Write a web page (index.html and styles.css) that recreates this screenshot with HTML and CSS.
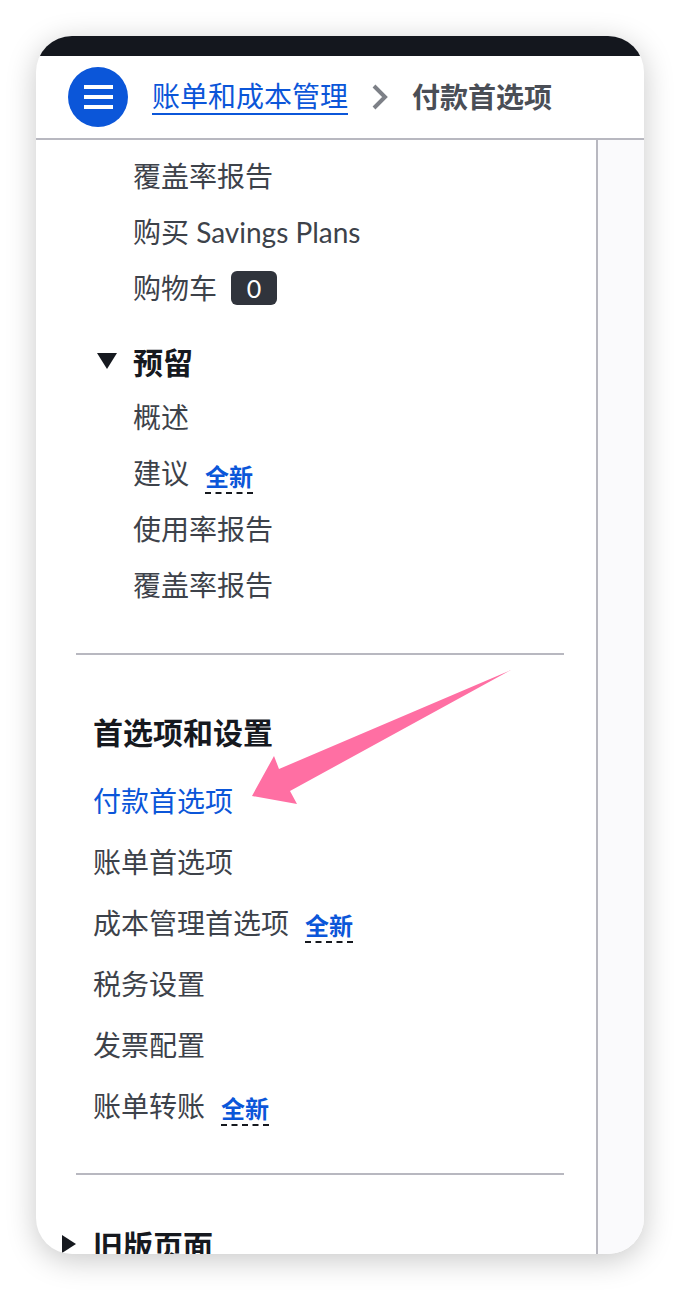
FILE: index.html
```html
<!DOCTYPE html>
<html lang="zh-CN">
  <head>
    <meta charset="UTF-8" />
    <meta name="viewport" content="width=device-width, initial-scale=1.0" />
    <title>付款首选项</title>
    <link rel="stylesheet" href="styles.css">
  </head>
  <body>
    <div class="phone">
      <div class="status-bar"></div>
      <header class="top-nav">
        <button class="menu-btn" aria-label="菜单">
          <span></span><span></span><span></span>
        </button>
        <nav class="crumbs">
          <a href="#" class="crumb-link">账单和成本管理</a>
          <svg class="crumb-sep" width="20" height="28" viewBox="0 0 20 28">
            <polyline points="4,3 15,14 4,25" fill="none" stroke="#7d8087" stroke-width="4" />
          </svg>
          <span class="crumb-current">付款首选项</span>
        </nav>
      </header>
      <div class="layout">
        <aside class="side-nav">
          <ul class="sub-list">
            <li>覆盖率报告</li>
            <li>购买 Savings Plans</li>
            <li>购物车 <span class="count">0</span></li>
          </ul>
          <div class="group">
            <div class="group-title"><span class="caret-down"></span>预留</div>
            <ul class="sub-list">
              <li>概述</li>
              <li>建议 <span class="new">全新</span></li>
              <li>使用率报告</li>
              <li>覆盖率报告</li>
            </ul>
          </div>
          <hr class="divider" />
          <h2 class="section-title">首选项和设置</h2>
          <ul class="link-list">
            <li class="active">付款首选项</li>
            <li>账单首选项</li>
            <li>成本管理首选项 <span class="new">全新</span></li>
            <li>税务设置</li>
            <li>发票配置</li>
            <li>账单转账 <span class="new">全新</span></li>
          </ul>
          <hr class="divider second" />
          <div class="legacy"><span class="caret-right"></span>旧版页面</div>
        </aside>
        <div class="content"></div>
      </div>
      <svg class="pointer" width="608" height="1218" viewBox="36 36 608 1218">
        <polygon points="511,670 290,791 297,804 252,796 274,756 279,769" fill="#ff6fa3" />
      </svg>
    </div>
  </body>
</html>
```

FILE: styles.css
```css
body {
  margin: 0;
  background: #fff;
  font-family: Lato, "Noto Sans CJK SC", sans-serif;
}
.phone {
  position: relative;
  margin: 36px;
  width: 608px;
  height: 1218px;
  border-radius: 36px;
  overflow: hidden;
  background: #fff;
  box-shadow: 0 6px 30px rgba(0, 0, 0, 0.22);
  display: flex;
  flex-direction: column;
}
.status-bar {
  height: 20px;
  background: #14171e;
  flex-shrink: 0;
}
.top-nav {
  height: 82px;
  flex-shrink: 0;
  display: flex;
  align-items: center;
  padding-left: 32px;
  border-bottom: 2px solid #b8b8c0;
}
.menu-btn {
  width: 60px;
  height: 60px;
  border-radius: 50%;
  border: none;
  background: #0b56d9;
  display: flex;
  flex-direction: column;
  align-items: center;
  justify-content: center;
  gap: 6px;
  padding: 0;
}
.menu-btn span {
  display: block;
  width: 29px;
  height: 4px;
  background: #fff;
}
.crumbs {
  display: flex;
  align-items: center;
  margin-left: 24px;
  font-size: 28px;
  line-height: 36px;
}
.crumb-link {
  color: #0b56d9;
  text-decoration: none;
  border-bottom: 2px solid #0b56d9;
  line-height: 32px;
  padding-bottom: 1px;
}
.crumb-sep {
  margin: 0 22px 0 22px;
}
.crumb-current {
  color: #4a4e56;
  font-weight: 700;
}
.layout {
  flex: 1;
  display: flex;
  min-height: 0;
}
.side-nav {
  width: 560px;
  flex-shrink: 0;
  border-right: 2px solid #b8b8c0;
  padding-top: 8px;
  color: #3d424a;
  font-size: 28px;
}
.content {
  flex: 1;
  background: #fafafc;
}
ul {
  list-style: none;
  margin: 0;
  padding: 0;
}
.sub-list {
  padding-left: 97px;
}
.sub-list li {
  line-height: 56px;
  height: 56px;
  display: flex;
  align-items: center;
}
.count {
  display: inline-flex;
  align-items: center;
  justify-content: center;
  width: 46px;
  height: 34px;
  margin-left: 14px;
  border-radius: 6px;
  background: #30343c;
  color: #fff;
  font-size: 25px;
  line-height: 34px;
}
.new {
  color: #0b56d9;
  font-weight: 700;
  font-size: 24px;
  line-height: 30px;
  margin-left: 16px;
  border-bottom: 2px dashed #16191f;
  margin-top: 10px;
}
.group {
  margin-top: 17px;
}
.group-title {
  display: flex;
  align-items: center;
  height: 56px;
  padding-left: 61px;
  font-weight: 700;
  font-size: 30px;
  color: #16191f;
}
.caret-down {
  width: 0;
  height: 0;
  border-left: 10px solid transparent;
  border-right: 10px solid transparent;
  border-top: 16px solid #16191f;
  margin-right: 16px;
}
.divider {
  border: none;
  border-top: 2px solid #b8b8c0;
  margin: 40px 32px 0 40px;
}
.divider.second {
  margin-top: 38px;
}
.section-title {
  margin: 57px 0 0 57px;
  font-size: 30px;
  line-height: 40px;
  font-weight: 700;
  color: #16191f;
}
.link-list {
  margin-top: 17px;
  padding-left: 57px;
}
.link-list li {
  height: 61px;
  display: flex;
  align-items: center;
}
.link-list li.active {
  color: #0b56d9;
}
.legacy {
  margin-top: 49px;
  padding-left: 26px;
  display: flex;
  align-items: center;
  height: 40px;
  font-size: 30px;
  font-weight: 700;
  color: #16191f;
}
.caret-right {
  width: 0;
  height: 0;
  border-top: 9px solid transparent;
  border-bottom: 9px solid transparent;
  border-left: 14px solid #16191f;
  margin-right: 17px;
}
.pointer {
  position: absolute;
  left: 0;
  top: 0;
  pointer-events: none;
}
```
